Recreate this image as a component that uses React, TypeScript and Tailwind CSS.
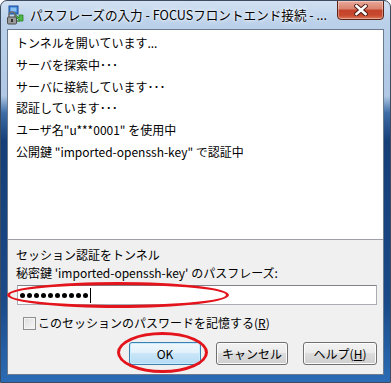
import React from "react";

const jp = { fontFamily: '"Noto Sans CJK JP", "Noto Sans", sans-serif' };

function KeyIcon() {
  return (
    <svg width="20" height="20" viewBox="0 0 20 20">
      <rect x="4" y="1" width="9" height="8" fill="#3a7fd6" stroke="#1d4f9a" />
      <rect x="5.5" y="2.5" width="6" height="4" fill="#8cc0f4" />
      <path d="M10 9 L14 13 L14 10 L18 10 L18 16 L12 16 L15 16 L11 12 Z" fill="#4fb848" stroke="#2b7f2a" strokeWidth="0.8" />
      <path d="M4 12 V10 a3 3 0 0 1 6 0 V12" fill="none" stroke="#6b6b6b" strokeWidth="1.5" />
      <rect x="2.5" y="12" width="9" height="7" rx="1" fill="#9a9a9a" stroke="#4d4d4d" />
      <rect x="6" y="14" width="2" height="3" fill="#333" />
    </svg>
  );
}

function CloseX() {
  return (
    <svg width="14" height="12" viewBox="0 0 14 12">
      <path d="M2.5 2 L11.5 10 M11.5 2 L2.5 10" stroke="#4a1a12" strokeWidth="4.4" strokeLinecap="square" />
      <path d="M2.5 2 L11.5 10 M11.5 2 L2.5 10" stroke="#ffffff" strokeWidth="2.6" strokeLinecap="square" />
    </svg>
  );
}

const lines = [
  "トンネルを開いています...",
  "サーバを探索中･･･",
  "サーバに接続しています･･･",
  "認証しています･･･",
  "ユーザ名\"u***0001\" を使用中",
  "公開鍵 \"imported-openssh-key\" で認証中",
];

export default function App() {
  return (
    <div
      style={jp}
      className="relative flex h-[383px] w-[391px] flex-col overflow-hidden rounded-t-[7px] border border-[#3d4b5e] bg-[linear-gradient(180deg,#d2e1f2_0px,#bbd1ea_20px,#b0c8e4_95px,#3d6ca6_112px,#163f78_140px,#1a4a88_300px,#2c6cb6_383px)] text-black"
    >
      <div className="flex h-[28px] shrink-0 items-start">
        <div className="ml-[4px] mt-[4px]">
          <KeyIcon />
        </div>
        <div className="ml-[5px] mt-[4px] text-[12.6px] leading-[20px] whitespace-nowrap [text-shadow:0_0_6px_#ffffff,0_0_3px_#ffffff]">
          パスフレーズの入力 - FOCUSフロントエンド接続 - ...
        </div>
        <div className="ml-auto mr-[6px] -mt-px flex h-[20px] w-[47px] items-center justify-center rounded-b-[4px] border border-[#5e2318] bg-[linear-gradient(180deg,#e9a99b_0%,#d9826d_45%,#c4412a_50%,#c84a2f_80%,#de7a5a_100%)] shadow-[inset_0_0_0_1px_rgba(255,255,255,0.35)]">
          <CloseX />
        </div>
      </div>

      <div className="mb-[7px] ml-[6px] mr-[6px] flex flex-1 flex-col border border-[#6b7a8e] bg-[#f0f0f0]">
        <div className="h-[210px] shrink-0 border-b border-[#a0a0a8] bg-white pl-[8px] pt-[2px] text-[12px] leading-[21.8px]">
          {lines.map((l) => (
            <div key={l} className="whitespace-nowrap">
              {l}
            </div>
          ))}
        </div>

        <div className="flex flex-1 flex-col pl-[8px] pt-[6px] text-[12px] leading-[18px]">
          <div>セッション認証をトンネル</div>
          <div>秘密鍵 'imported-openssh-key' のパスフレーズ:</div>
          <div className="ml-[1px] mt-[3px] flex h-[20px] w-[360px] items-center border border-[#abadb3] border-t-[#7f8288] bg-white pl-[2px]">
            <div className="flex gap-[2px]">
              {Array.from({ length: 10 }).map((_, i) => (
                <span key={i} className="h-[5px] w-[5px] rounded-full bg-black" />
              ))}
            </div>
            <span className="ml-[2px] h-[15px] w-px bg-black" />
          </div>

          <div className="ml-[7px] mt-[11px] flex items-center">
            <span className="h-[13px] w-[13px] border border-[#8e8f8f] bg-[linear-gradient(135deg,#dcdcdc,#f8f8f8)] shadow-[inset_0_0_0_1px_#f4f4f4]" />
            <span className="ml-[2px] leading-[14px]">
              このセッションのパスワードを記憶する(<span className="underline">R</span>)
            </span>
          </div>

          <div className="mt-[12px] flex justify-end gap-[15px] pr-[6px]">
            <button className="flex h-[23px] w-[72px] items-center justify-center rounded-[3px] border border-[#3c7fb1] bg-[linear-gradient(180deg,#f0f7fc_0%,#e3f1fb_45%,#cbe6f8_50%,#b4dbf4_100%)] text-[12px] shadow-[inset_0_0_0_1px_#c7ecfd]">
              OK
            </button>
            <button className="flex h-[23px] w-[72px] items-center justify-center rounded-[3px] border border-[#707070] bg-[linear-gradient(180deg,#f2f2f2_0%,#ebebeb_45%,#dddddd_50%,#cfcfcf_100%)] text-[12px] shadow-[inset_0_0_0_1px_#fcfcfc]">
              キャンセル
            </button>
            <button className="flex h-[23px] w-[74px] items-center justify-center rounded-[3px] border border-[#707070] bg-[linear-gradient(180deg,#f2f2f2_0%,#ebebeb_45%,#dddddd_50%,#cfcfcf_100%)] text-[12px] shadow-[inset_0_0_0_1px_#fcfcfc]">
              ヘルプ(<span className="underline">H</span>)
            </button>
          </div>
        </div>
      </div>

      <div className="pointer-events-none absolute left-[6px] top-[281px] h-[26px] w-[222px] rounded-[50%] border-[3px] border-[#e3141c]" />
      <div className="pointer-events-none absolute left-[116px] top-[331px] h-[41px] w-[91px] rounded-[50%] border-[3px] border-[#e3141c]" />
    </div>
  );
}
